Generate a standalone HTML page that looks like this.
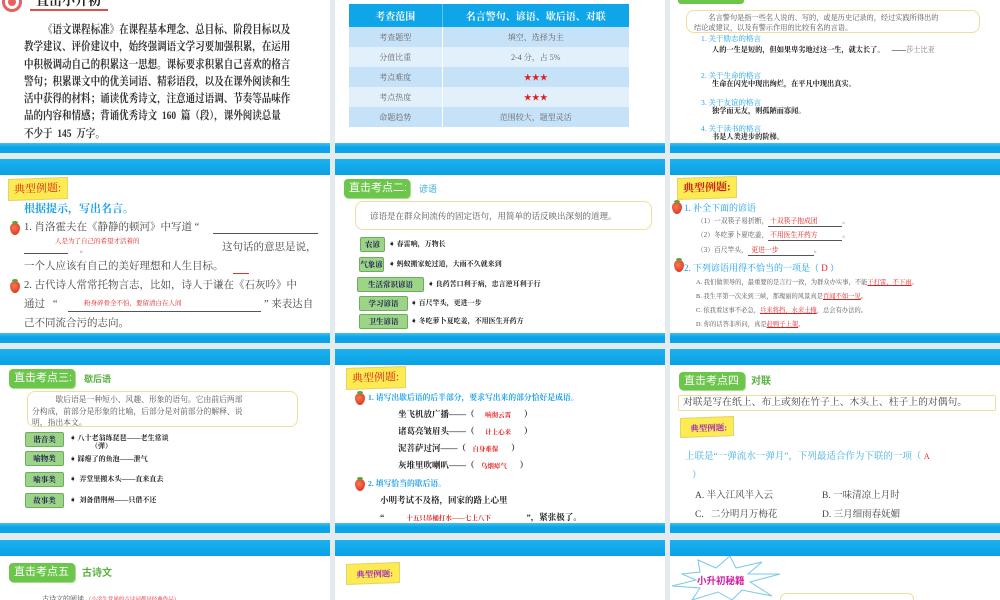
<!DOCTYPE html>
<html><head><meta charset="utf-8"><style>
*{margin:0;padding:0;box-sizing:border-box}
body{width:1000px;height:600px;position:relative;overflow:hidden;background:#e3ebef;font-family:"Liberation Serif","Noto Serif CJK SC","Noto Sans CJK SC",serif;color:#222}
.s{position:absolute;background:#fff;overflow:hidden}
.bb{position:absolute;left:0;right:0;height:10px;background:linear-gradient(#40c4f2,#0ca4e8 40%,#0ca4e8)}
.bt{position:absolute;left:0;right:0;height:16px;top:0;background:linear-gradient(#1cb0ee,#0aa2e6)}
.t{position:absolute;white-space:nowrap;line-height:1}
.g{font-family:"Liberation Sans","Noto Sans CJK SC",sans-serif}
.tag{position:absolute;background:#6cc64c;color:#fff;border-radius:4px;font-family:"Liberation Sans","Noto Sans CJK SC",sans-serif;font-size:11px;line-height:20px;padding-left:5px;box-shadow:1px 1px 0 #a8dc90;white-space:nowrap}
.yt{position:absolute;background:#fcec52;border:1px solid #e8d070;color:#d8281c;font-size:11px;line-height:20px;padding-left:5px;transform:skewY(-2deg);white-space:nowrap}
.box{position:absolute;border:1.5px solid #f2dca0;border-radius:8px}
.lb{position:absolute;background:#9cd488;border:1px solid #6cae5c;border-radius:2px;color:#225;font-size:7.5px;line-height:13px;text-align:center;font-weight:bold;white-space:nowrap}
.ar{position:absolute;font-size:7px;font-weight:bold;white-space:nowrap;line-height:1.2}
.sb{position:absolute;width:10px;height:12px;border-radius:50% 50% 50% 50%/40% 40% 60% 60%;background:radial-gradient(circle at 40% 40%,#f87850,#d02818);}
.sb:before{content:"";position:absolute;left:2px;top:-2px;width:6px;height:3px;background:#58a830;border-radius:50%}
.red{color:#e02020}
.blue{color:#1aa0e8}
.u{border-bottom:1px solid #555}
.sq{transform:scaleX(0.85);transform-origin:left top}
</style></head><body>

<!-- ROW 1 -->
<div class="s" style="left:0;top:0;width:330px;height:153px">
 <div style="position:absolute;left:2px;top:-8px;width:20px;height:20px;border-radius:50%;border:3px solid #e86060;background:#fff"></div>
 <div style="position:absolute;left:8px;top:-2px;width:8px;height:8px;border-radius:50%;background:#e86060"></div>
 <div class="t" style="left:36px;top:-6px;font-size:13px;font-weight:bold">直击小升初</div>
 <div style="position:absolute;left:30px;top:9px;width:78px;height:2px;background:#d85050"></div>
 <div class="sq" style="position:absolute;left:24px;top:22px;width:330px;font-size:11.2px;line-height:17.3px;font-weight:bold;color:#333;white-space:nowrap">
 <div>&emsp;&emsp;《语文课程标准》在课程基本理念、总目标、阶段目标以及</div>
 <div>教学建议、评价建议中，始终强调语文学习要加强积累，在运用</div>
 <div>中积极调动自己的积累这一思想。课标要求积累自己喜欢的格言</div>
 <div>警句；积累课文中的优美词语、精彩语段，以及在课外阅读和生</div>
 <div>活中获得的材料；诵读优秀诗文，注意通过语调、节奏等品味作</div>
 <div>品的内容和情感；背诵优秀诗文&ensp;160&ensp;篇（段），课外阅读总量</div>
 <div>不少于&ensp;145&ensp;万字。</div></div>
 <div class="bb" style="top:143px"></div>
</div>

<div class="s" style="left:335px;top:0;width:330px;height:153px">
 <table style="position:absolute;left:14px;top:4px;width:280px;border-collapse:collapse;font-size:8px;color:#666;text-align:center">
  <tr style="background:#0ea6e8;color:#fff;font-weight:bold;font-size:10px;height:23px"><td style="width:93px;border-right:1px solid #60c4f0">考查范围</td><td>名言警句、谚语、歇后语、对联</td></tr>
  <tr style="background:#c6e2f8;height:20px"><td style="border-right:1px solid #fff">考查题型</td><td>填空、选择为主</td></tr>
  <tr style="background:#e2f0fc;height:20px"><td style="border-right:1px solid #fff">分值比重</td><td>2-4 分，占 5%</td></tr>
  <tr style="background:#c6e2f8;height:20px"><td style="border-right:1px solid #fff">考点难度</td><td class="red">★★★</td></tr>
  <tr style="background:#e2f0fc;height:20px"><td style="border-right:1px solid #fff">考点热度</td><td class="red">★★★</td></tr>
  <tr style="background:#c6e2f8;height:20px"><td style="border-right:1px solid #fff">命题趋势</td><td>范围较大，题型灵活</td></tr>
 </table>
 <div class="bb" style="top:143px"></div>
</div>

<div class="s" style="left:670px;top:0;width:330px;height:153px">
 <div style="position:absolute;left:8px;top:-6px;width:66px;height:10px;background:#6cc64c;border-radius:3px"></div>
 <div class="box" style="left:16px;top:10px;width:294px;height:23px"></div>
 <div class="t" style="left:24px;top:13px;font-size:7.2px;color:#555;line-height:10px">&emsp;&emsp;名言警句是指一些名人说的、写的，或是历史记录的，经过实践所得出的<br>结论或建议，以及有警示作用的比较有名的言语。</div>
 <div class="t blue" style="left:31px;top:35px;font-size:7.5px">1. 关于励志的格言</div>
 <div class="t" style="left:42px;top:47px;font-size:7.2px;font-weight:bold">人的一生是短的，但如果卑劣地过这一生，就太长了。&emsp;——<span style="color:#777;font-weight:normal">莎士比亚</span></div>
 <div class="t blue" style="left:31px;top:72px;font-size:7.5px">2. 关于生命的格言</div>
 <div class="t" style="left:42px;top:81px;font-size:7.2px;font-weight:bold">生命在闪光中现出绚烂，在平凡中现出真实。</div>
 <div class="t blue" style="left:31px;top:99px;font-size:7.5px">3. 关于友谊的格言</div>
 <div class="t" style="left:42px;top:108px;font-size:7.2px;font-weight:bold">独学而无友，则孤陋而寡闻。</div>
 <div class="t blue" style="left:31px;top:125px;font-size:7.5px">4. 关于读书的格言</div>
 <div class="t" style="left:42px;top:134px;font-size:7.2px;font-weight:bold">书是人类进步的阶梯。</div>
 <div class="bb" style="top:143px"></div>
</div>

<!-- ROW 2 -->
<div class="s" style="left:0;top:159px;width:330px;height:184px">
 <div class="bt"></div>
 <div class="yt" style="left:8px;top:19px;width:60px;height:22px">典型例题:</div>
 <div class="t blue" style="left:24px;top:45px;font-size:11px;font-weight:bold">根据提示，写出名言。</div>
 <div class="sb" style="left:10px;top:64px"></div>
 <div class="t" style="left:24px;top:64px;font-size:10.5px;color:#444">1. 肖洛霍夫在《静静的顿河》中写道 “</div>
 <div style="position:absolute;left:213px;top:74px;width:105px;border-bottom:1px solid #555"></div>
 <div style="position:absolute;left:24px;top:94px;width:44px;border-bottom:1px solid #555"></div>
 <div class="t red" style="left:55px;top:80px;font-size:6.5px">人是为了自己的希望才活着的</div>
 <div class="t" style="left:80px;top:88px;font-size:7px">。</div>
 <div class="t" style="left:222px;top:84px;font-size:10.5px;color:#444">这句话的意思是说，</div>
 <div class="t" style="left:24px;top:103px;font-size:10.5px;color:#444">一个人应该有自己的美好理想和人生目标。</div>
 <div style="position:absolute;left:233px;top:114px;width:16px;border-bottom:1.5px solid #e03030"></div>
 <div class="sb" style="left:10px;top:122px"></div>
 <div class="t" style="left:24px;top:122px;font-size:10.5px;color:#444">2. 古代诗人常常托物言志，比如，诗人于谦在《石灰吟》中</div>
 <div class="t" style="left:24px;top:141px;font-size:10.5px;color:#444">通过 &ensp;“</div>
 <div style="position:absolute;left:68px;top:152px;width:193px;border-bottom:1px solid #555"></div>
 <div class="t red" style="left:84px;top:142px;font-size:6.5px">粉身碎骨全不怕，要留清白在人间</div>
 <div class="t" style="left:264px;top:141px;font-size:10.5px;color:#444">” 来表达自</div>
 <div class="t" style="left:24px;top:160px;font-size:10.5px;color:#444">己不同流合污的志向。</div>
 <div class="bb" style="top:174px"></div>
</div>

<div class="s" style="left:335px;top:159px;width:330px;height:184px">
 <div class="bt"></div>
 <div class="tag" style="left:9px;top:20px;width:66px;height:19px;line-height:19px">直击考点二:</div>
 <div class="t g" style="left:84px;top:26px;font-size:9px;color:#3cb0d8">谚语</div>
 <div class="box" style="left:20px;top:42px;width:297px;height:29px"></div>
 <div class="t" style="left:35px;top:53px;font-size:8.5px;color:#555">谚语是在群众间流传的固定语句，用简单的话反映出深刻的道理。</div>
 <div class="lb" style="left:25px;top:78px;width:25px">农谚</div><div class="ar" style="left:54px;top:81px">➧ 春雷响，万物长</div>
 <div class="lb" style="left:24px;top:98px;width:25px">气象谚</div><div class="ar" style="left:54px;top:101px">➧ 蚂蚁搬家蛇过道，大雨不久就来到</div>
 <div class="lb" style="left:22px;top:118px;width:67px">生活常识谚语</div><div class="ar" style="left:93px;top:121px">➧ 良药苦口利于病，忠言逆耳利于行</div>
 <div class="lb" style="left:24px;top:137px;width:49px">学习谚语</div><div class="ar" style="left:76px;top:140px">➧ 百尺竿头，更进一步</div>
 <div class="lb" style="left:24px;top:155px;width:49px">卫生谚语</div><div class="ar" style="left:76px;top:158px">➧ 冬吃萝卜夏吃姜，不用医生开药方</div>
 <div class="bb" style="top:174px"></div>
</div>

<div class="s" style="left:670px;top:159px;width:330px;height:184px">
 <div class="bt"></div>
 <div class="yt" style="left:7px;top:18px;width:60px;height:22px;color:#c82020;font-weight:bold">典型例题:</div>
 <div class="sb" style="left:2px;top:43px"></div>
 <div class="t blue" style="left:14px;top:45px;font-size:9px">1. 补全下面的谚语</div>
 <div class="t" style="left:27px;top:60px;font-size:6.8px;color:#555">（1）一双筷子易折断，<span class="red u" style="display:inline-block;width:74px">&nbsp;十双筷子抱成团</span>。</div>
 <div class="t" style="left:27px;top:74px;font-size:6.8px;color:#555">（2）冬吃萝卜夏吃姜，<span class="red u" style="display:inline-block;width:74px">&nbsp;不用医生开药方</span>。</div>
 <div class="t" style="left:27px;top:89px;font-size:6.8px;color:#555">（3）百尺竿头，<span class="red u" style="display:inline-block;width:66px">&nbsp;&nbsp;更进一步</span>。</div>
 <div class="sb" style="left:4px;top:101px"></div>
 <div class="t blue" style="left:14px;top:105px;font-size:9px">2. 下列谚语用得不恰当的一项是（ <span class="red">D</span> ）</div>
 <div class="t" style="left:26px;top:121px;font-size:6.3px;color:#555">A. 我们做领导的，最重要的是言行一致，为群众办实事，不能<span class="red" style="text-decoration:underline">干打雷，不下雨</span>。</div>
 <div class="t" style="left:26px;top:135px;font-size:6.3px;color:#555">B. 我生平第一次来到三峡，那瑰丽的风景真是<span class="red" style="text-decoration:underline">百闻不如一见</span>。</div>
 <div class="t" style="left:26px;top:149px;font-size:6.3px;color:#555">C. 依我看这事不必急，<span class="red" style="text-decoration:underline">兵来将挡，水来土掩</span>，总会有办法的。</div>
 <div class="t" style="left:26px;top:163px;font-size:6.3px;color:#555">D. 你的话答非所问，真是<span class="red" style="text-decoration:underline">赶鸭子上架</span>。</div>
 <div class="bb" style="top:174px"></div>
</div>

<!-- ROW 3 -->
<div class="s" style="left:0;top:349px;width:330px;height:184px">
 <div class="bt"></div>
 <div class="tag" style="left:9px;top:20px;width:66px;height:19px;line-height:19px">直击考点三:</div>
 <div class="t g" style="left:84px;top:26px;font-size:9px;color:#58b040;font-weight:bold">歇后语</div>
 <div class="box" style="left:27px;top:42px;width:271px;height:36px"></div>
 <div class="t" style="left:32px;top:45px;font-size:7.8px;color:#555;line-height:11.5px">&emsp;&emsp;&emsp;歇后语是一种短小、风趣、形象的语句。它由前后两部<br>分构成，前部分是形象的比喻，后部分是对前部分的解释、说<br>明，指出本文。</div>
 <div class="lb" style="left:25px;top:83px;width:39px">谐音类</div><div class="ar" style="left:70px;top:85px">➧ 八十老翁练琵琶——老生常谈<br>&emsp;&emsp;&emsp;（弹）</div>
 <div class="lb" style="left:25px;top:102px;width:39px">喻物类</div><div class="ar" style="left:70px;top:106px">➧ 踩瘪了的鱼泡——泄气</div>
 <div class="lb" style="left:25px;top:123px;width:39px">喻事类</div><div class="ar" style="left:70px;top:126px">➧&ensp;弄堂里搬木头——直来直去</div>
 <div class="lb" style="left:25px;top:144px;width:39px">故事类</div><div class="ar" style="left:70px;top:147px">➧&ensp;刘备借荆州——只借不还</div>
 <div class="bb" style="top:174px"></div>
</div>

<div class="s" style="left:335px;top:349px;width:330px;height:184px">
 <div class="bt"></div>
 <div class="yt" style="left:11px;top:18px;width:60px;height:22px">典型例题:</div>
 <div class="sb" style="left:20px;top:44px"></div>
 <div class="t blue" style="left:33px;top:45px;font-size:7.8px;font-weight:bold">1. 请写出歇后语的后半部分，要求写出来的部分恰好是成语。</div>
 <div class="t" style="left:63px;top:61px;font-size:8.5px;font-weight:bold">坐飞机放广播——（ &ensp;&ensp;<span class="red" style="font-size:6.5px">响彻云霄</span>&emsp;&ensp;）</div>
 <div class="t" style="left:63px;top:78px;font-size:8.5px;font-weight:bold">诸葛亮皱眉头——（ &ensp;&ensp;<span class="red" style="font-size:6.5px">计上心来</span>&emsp;&ensp;）</div>
 <div class="t" style="left:63px;top:95px;font-size:8.5px;font-weight:bold">泥菩萨过河——（ &ensp;<span class="red" style="font-size:6.5px">自身难保</span>&emsp;&ensp;）</div>
 <div class="t" style="left:63px;top:112px;font-size:8.5px;font-weight:bold">灰堆里吹喇叭——（ &ensp;<span class="red" style="font-size:6.5px">乌烟瘴气</span>&emsp;&ensp;）</div>
 <div class="sb" style="left:20px;top:130px"></div>
 <div class="t blue" style="left:33px;top:131px;font-size:7.8px;font-weight:bold">2. 填写恰当的歇后语。</div>
 <div class="t" style="left:45px;top:147px;font-size:8.5px;font-weight:bold">小明考试不及格，回家的路上心里</div>
 <div class="t" style="left:45px;top:164px;font-size:8.5px;font-weight:bold">“ <span class="red u" style="display:inline-block;width:138px;font-size:6.5px;padding-left:20px">十五只吊桶打水——七上八下</span> ”，紧张极了。</div>
 <div class="bb" style="top:174px"></div>
</div>

<div class="s" style="left:670px;top:349px;width:330px;height:184px">
 <div class="bt"></div>
 <div class="tag" style="left:9px;top:23px;width:66px;height:18px;line-height:18px">直击考点四</div>
 <div class="t g" style="left:81px;top:28px;font-size:10px;color:#58b040;font-weight:bold">对联</div>
 <div class="box" style="left:8px;top:46px;width:318px;height:16px;border-radius:2px"></div>
 <div class="t" style="left:13px;top:49px;font-size:9.8px;color:#444">对联是写在纸上、布上或刻在竹子上、木头上、柱子上的对偶句。</div>
 <div class="yt" style="left:10px;top:68px;width:54px;height:20px;color:#a020c0;font-weight:bold;font-size:8.5px">&ensp;典型例题:</div>
 <div class="t" style="left:15px;top:104px;font-size:9.5px;color:#40b0e0">上联是“一弹流水一弹月”，下列最适合作为下联的一项（ <span class="red" style="font-size:8px">A</span></div>
 <div class="t" style="left:22px;top:123px;font-size:9.5px;color:#40b0e0">）</div>
 <div class="t" style="left:25px;top:143px;font-size:9.5px;color:#444">A. 半入江风半入云</div>
 <div class="t" style="left:152px;top:143px;font-size:9.5px;color:#444">B. 一味清凉上月时</div>
 <div class="t" style="left:25px;top:162px;font-size:9.5px;color:#444">C.&ensp; 二分明月万梅花</div>
 <div class="t" style="left:152px;top:162px;font-size:9.5px;color:#444">D. 三月细雨春妩媚</div>
 <div class="bb" style="top:174px"></div>
</div>

<!-- ROW 4 -->
<div class="s" style="left:0;top:540px;width:330px;height:60px">
 <div class="bt"></div>
 <div class="tag" style="left:9px;top:23px;width:66px;height:19px;line-height:19px">直击考点五</div>
 <div class="t g" style="left:82px;top:29px;font-size:10px;color:#58b040;font-weight:bold">古诗文</div>
 <div class="t" style="left:42px;top:56px;font-size:7px;color:#444">古诗文的阅读 <span class="red" style="font-size:5.5px">（小学生背诵的古诗词都是经典作品）</span></div>
</div>
<div class="s" style="left:335px;top:540px;width:330px;height:60px">
 <div class="bt"></div>
 <div class="yt" style="left:11px;top:23px;width:54px;height:21px;color:#a020c0;font-weight:bold;font-size:8.5px">&ensp;典型例题:</div>
</div>
<div class="s" style="left:670px;top:540px;width:330px;height:60px">
 <div class="bt"></div>
 <svg style="position:absolute;left:2px;top:16px" width="110" height="44"><polygon points="10,18 28,16 26,4 44,12 58,0 64,12 90,6 76,18 108,18 78,26 100,40 70,34 60,44 46,36 20,44 28,32 0,30 24,24" fill="#fff" stroke="#7ac8e8" stroke-width="1"/></svg>
 <div class="t g" style="left:27px;top:37px;font-size:9.5px;color:#d020a0;font-weight:bold">小升初秘籍</div>
 <div style="position:absolute;left:110px;top:53px;width:134px;height:20px;border:1.5px solid #f2dca0;border-radius:6px"></div>
</div>

</body></html>
